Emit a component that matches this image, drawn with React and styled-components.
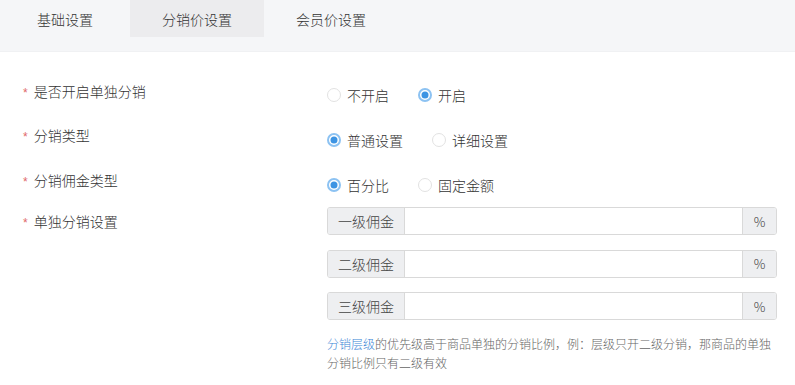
import { useState } from "react";
import styled, { createGlobalStyle } from "styled-components";

const GlobalStyle = createGlobalStyle`
  body {
    margin: 0;
    background: #fff;
    font-family: "Noto Sans CJK SC", "Liberation Sans", sans-serif;
    font-weight: 300;
    color: #333;
  }
  input {
    font-family: inherit;
  }
`;

const Header = styled.div`
  height: 52px;
  background: #f5f6f8;
  border-bottom: 1px solid #f0f1f3;
  box-sizing: border-box;
  display: flex;
  align-items: flex-start;
`;

const Tab = styled.div`
  min-width: 130px;
  height: 37px;
  padding: 0 32px;
  box-sizing: border-box;
  display: flex;
  align-items: center;
  justify-content: center;
  font-size: 14px;
  color: #333;
  background: ${(p) => (p.$active ? "#ececee" : "transparent")};
  cursor: pointer;
`;

const Form = styled.div`
  padding: 25px 18px 0 20px;
  display: flex;
  flex-direction: column;
  gap: 10px;
`;

const Row = styled.div`
  display: flex;
  align-items: flex-start;
`;

const Label = styled.div`
  width: 307px;
  flex-shrink: 0;
  font-size: 14px;
  line-height: 24px;
  color: #333;
  display: flex;
  align-items: center;

  &::before {
    content: "*";
    color: #e0676a;
    font-family: "Liberation Sans", sans-serif;
    font-weight: 400;
    font-size: 12px;
    margin: 4px 6px 0 3px;
  }
`;

const Control = styled.div`
  flex: 1;
  display: flex;
  flex-direction: column;
  gap: 14.5px;
`;

const RadioControl = styled.div`
  flex: 1;
  height: ${(p) => p.$h}px;
  box-sizing: border-box;
  padding-top: ${(p) => p.$top}px;
`;

const RadioGroup = styled.div`
  display: flex;
  align-items: center;
  height: 28px;
`;

const RadioItem = styled.label`
  display: flex;
  align-items: center;
  font-size: 14px;
  color: #333;
  margin-right: 29px;
  cursor: pointer;
`;

const Circle = styled.span`
  width: 14px;
  height: 14px;
  border-radius: 50%;
  box-sizing: border-box;
  margin: 0 6px 0 0;
  position: relative;
  border: ${(p) => (p.$on ? "2px solid #8cc2f2" : "1px solid #e2e2e2")};
  background: #fff;

  &::after {
    content: "";
    display: ${(p) => (p.$on ? "block" : "none")};
    position: absolute;
    left: 50%;
    top: 50%;
    width: 7px;
    height: 7px;
    border-radius: 50%;
    background: #3d94e3;
    transform: translate(-50%, -50%);
  }
`;

const InputGroup = styled.div`
  display: flex;
  height: 28px;
  width: 450px;
  border: 1px solid #d9d9d9;
  border-radius: 3px;
  box-sizing: border-box;
  overflow: hidden;
`;

const Addon = styled.span`
  background: #eeeff1;
  font-size: ${(p) => (p.$small ? "13px" : "14px")};
  color: #444;
  display: flex;
  align-items: center;
  justify-content: center;
  padding: 0 10px;
  width: ${(p) => (p.$small ? "34px" : "auto")};
  box-sizing: border-box;
  border-left: ${(p) => (p.$small ? "1px solid #d9d9d9" : "none")};
  border-right: ${(p) => (p.$small ? "none" : "1px solid #d9d9d9")};
`;

const Input = styled.input`
  flex: 1;
  border: none;
  outline: none;
  padding: 0 8px;
  font-size: 14px;
  min-width: 0;
`;

const Hint = styled.div`
  width: 450px;
  font-size: 12px;
  line-height: 19px;
  color: #666;
  margin-top: -1px;
`;

const Link = styled.span`
  color: #3b86d6;
`;

function Radios({ options, value, onChange }) {
  return (
    <RadioGroup>
      {options.map((o) => (
        <RadioItem key={o} onClick={() => onChange(o)}>
          <Circle $on={value === o} />
          {o}
        </RadioItem>
      ))}
    </RadioGroup>
  );
}

export default function App() {
  const [open, setOpen] = useState("开启");
  const [type, setType] = useState("普通设置");
  const [mode, setMode] = useState("百分比");

  return (
    <>
      <GlobalStyle />
      <Header>
        <Tab>基础设置</Tab>
        <Tab $active>分销价设置</Tab>
        <Tab>会员价设置</Tab>
      </Header>
      <Form>
        <Row>
          <Label>是否开启单独分销</Label>
          <RadioControl $top={4} $h={34}>
            <Radios options={["不开启", "开启"]} value={open} onChange={setOpen} />
          </RadioControl>
        </Row>
        <Row>
          <Label>分销类型</Label>
          <RadioControl $top={5} $h={35}>
            <Radios options={["普通设置", "详细设置"]} value={type} onChange={setType} />
          </RadioControl>
        </Row>
        <Row>
          <Label>分销佣金类型</Label>
          <RadioControl $top={5} $h={31}>
            <Radios options={["百分比", "固定金额"]} value={mode} onChange={setMode} />
          </RadioControl>
        </Row>
        <Row>
          <Label>单独分销设置</Label>
          <Control>
            {["一级佣金", "二级佣金", "三级佣金"].map((l) => (
              <InputGroup key={l}>
                <Addon>{l}</Addon>
                <Input />
                <Addon $small>%</Addon>
              </InputGroup>
            ))}
            <Hint>
              <Link>分销层级</Link>的优先级高于商品单独的分销比例，例：层级只开二级分销，那商品的单独分销比例只有二级有效
            </Hint>
          </Control>
        </Row>
      </Form>
    </>
  );
}
